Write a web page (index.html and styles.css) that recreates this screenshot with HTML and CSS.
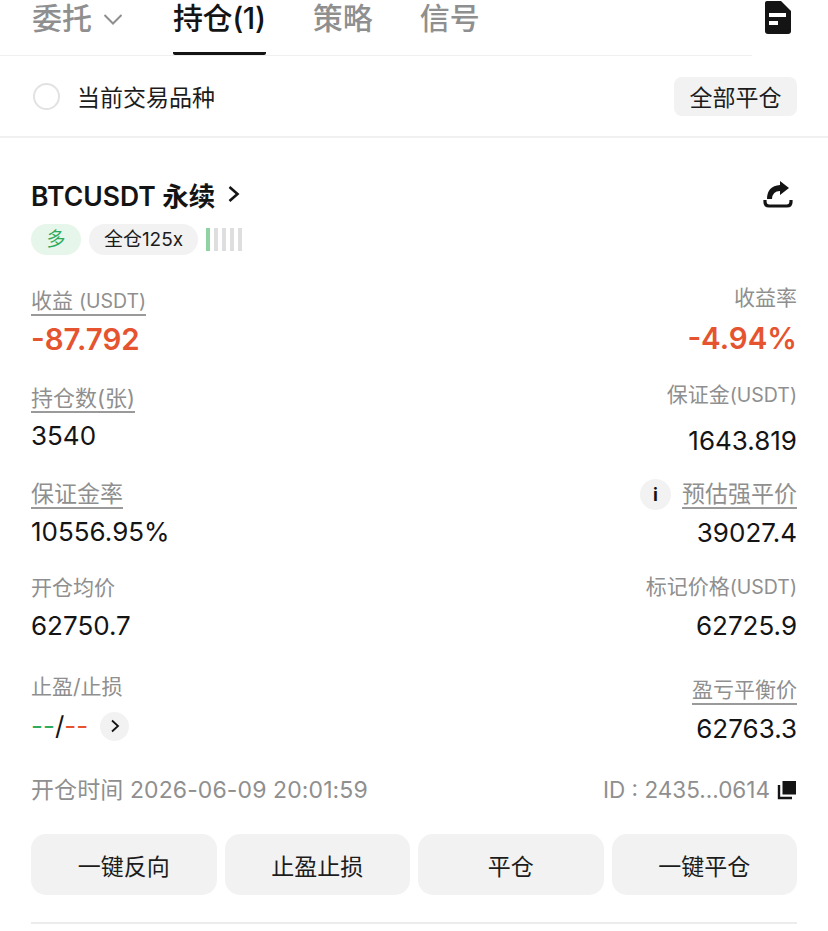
FILE: index.html
```html
<!DOCTYPE html>
<html lang="zh-CN">
<head>
    <meta charset="UTF-8">
    <meta name="viewport" content="width=device-width, initial-scale=1.0">
    <title>持仓</title>
    <link rel="stylesheet" href="styles.css">
</head>
<body>
    <!-- tabs -->
    <div class="tabs-row">
        <nav class="tabs">
            <span class="tab tab-first">委托<svg class="tab-caret" width="20" height="13" viewBox="0 0 20 13"><path d="M1.500 2 L10 10.500 L18.500 2" fill="none" stroke="#8f8f8f" stroke-width="2"/></svg></span>
            <span class="tab active">持仓(1)</span>
            <span class="tab">策略</span>
            <span class="tab">信号</span>
        </nav>
        <svg class="doc-icon" width="28" height="35" viewBox="0 0 28 35">
            <path d="M3 1 H17 L27 11 V31 Q27 34 24 34 H4 Q1 34 1 31 V3 Q1 1 3 1 Z" fill="#141414"/>
            <rect x="5" y="13" width="17" height="4" fill="#fff"/>
            <rect x="5" y="21" width="9" height="4" fill="#fff"/>
        </svg>
    </div>

    <div class="filter-row">
        <label class="filter-label"><span class="radio"></span>当前交易品种</label>
        <button class="close-all">全部平仓</button>
    </div>

    <!-- position card -->
    <section class="card">
        <div class="card-head">
            <div class="symbol">BTCUSDT 永续
                <svg class="symbol-arrow" width="14" height="18" viewBox="0 0 14 18"><path d="M2.500 2 L10.500 9 L2.500 16" fill="none" stroke="#141414" stroke-width="2.600"/></svg>
            </div>
            <svg class="share-icon" width="30" height="27" viewBox="0 0 30 27">
                <path d="M17 0 L26 7 L17 14 V10 Q9.500 10 9 18 H4 Q4 5 17 4 Z" fill="#141414"/>
                <path d="M2 19 V21 Q2 25 6 25 H24 Q28 25 28 21 V19" fill="none" stroke="#141414" stroke-width="3.200"/>
            </svg>
        </div>
        <div class="tags">
            <span class="tag tag-long">多</span>
            <span class="tag tag-lever">全仓125x</span>
            <span class="risk"><i class="on"></i><i></i><i></i><i></i><i></i></span>
        </div>

        <div class="metrics">
            <div class="metric-col">
                <div class="metric m-l1"><span class="label dotted">收益 <span class="latin">(USDT)</span></span><span class="value loss">-87.792</span></div>
                <div class="metric m-l2"><span class="label dotted">持仓数(张)</span><span class="value">3540</span></div>
                <div class="metric m-l3"><span class="label dotted">保证金率</span><span class="value">10556.95%</span></div>
                <div class="metric m-l4"><span class="label">开仓均价</span><span class="value">62750.7</span></div>
                <div class="metric m-l5"><span class="label">止盈/止损</span>
                    <span class="value tpsl"><b class="tp">--</b>/<b class="sl">--</b>
                        <span class="round-btn"><svg width="10" height="14" viewBox="0 0 10 14"><path d="M2 1.500 L8 7 L2 12.500" fill="none" stroke="#141414" stroke-width="1.800"/></svg></span>
                    </span>
                </div>
            </div>
            <div class="metric-col right">
                <div class="metric m-r1"><span class="label">收益率</span><span class="value loss">-4.94%</span></div>
                <div class="metric m-r2"><span class="label">保证金<span class="latin">(USDT)</span></span><span class="value">1643.819</span></div>
                <div class="metric m-r3"><span class="label-line"><span class="info">i</span><span class="label dotted">预估强平价</span></span><span class="value">39027.4</span></div>
                <div class="metric m-r4"><span class="label">标记价格<span class="latin">(USDT)</span></span><span class="value">62725.9</span></div>
                <div class="metric m-r5"><span class="label dotted">盈亏平衡价</span><span class="value">62763.3</span></div>
            </div>
        </div>

        <div class="meta">
            <span class="meta-time">开仓时间 2026-06-09 20:01:59</span>
            <span class="meta-id">ID : 2435...0614
                <svg width="20" height="20" viewBox="0 0 20 20"><rect x="5.500" y="1" width="13.500" height="13.500" fill="#141414"/><path d="M2 5 V18 H15" fill="none" stroke="#141414" stroke-width="2.400"/></svg>
            </span>
        </div>

        <div class="actions">
            <button>一键反向</button>
            <button>止盈止损</button>
            <button>平仓</button>
            <button>一键平仓</button>
        </div>
        <div class="card-end"></div>
    </section>
</body>
</html>
```

FILE: styles.css
```css
html, body {
    height: 931px;
    overflow: hidden;
}

body {
    margin: 0;
    background: #fff;
    color: #141414;
    font-family: Inter, 'Noto Sans CJK SC', sans-serif;
}

button {
    font-family: inherit;
    border: none;
    color: #1c1c1c;
}

.tabs-row {
    position: relative;
    height: 56px;
}

.tabs {
    display: flex;
    align-items: flex-start;
    gap: 47px;
    width: 720px;
    height: 55px;
    padding-left: 32px;
    border-bottom: 1px solid #efefef;
}

.tab {
    font-size: 30px;
    line-height: 37px;
    color: #8f8f8f;
    font-weight: 500;
    height: 55px;
    box-sizing: border-box;
}

.tab-first {
    margin-right: 3px;
}

.tab-caret {
    margin-left: 11px;
    vertical-align: 3px;
}

.tab.active {
    color: #141414;
    letter-spacing: -0.4px;
    border-bottom: 3px solid #141414;
    border-radius: 2px;
}

.doc-icon {
    position: absolute;
    right: 36px;
    top: 0;
}

.filter-row {
    display: flex;
    justify-content: space-between;
    align-items: center;
    height: 80px;
    padding: 0 31px 0 33px;
    border-bottom: 2px solid #f0f0f0;
}

.filter-label {
    display: flex;
    align-items: center;
    gap: 17px;
    font-size: 23px;
    color: #1c1c1c;
}

.radio {
    width: 23px;
    height: 23px;
    border: 2px solid #e2e2e2;
    border-radius: 50%;
}

.close-all {
    width: 123px;
    height: 39px;
    padding: 0;
    font-size: 23px;
    background: #f2f2f2;
    border-radius: 8px;
}

.card {
    padding: 0 31px 0 31px;
}

.card-head {
    display: flex;
    justify-content: space-between;
    align-items: center;
    height: 40px;
    margin-top: 36px;
}

.symbol {
    display: flex;
    align-items: center;
    gap: 12px;
    font-size: 26.500px;
    font-weight: 600;
}

.share-icon {
    margin-right: 4px;
}

.tags {
    display: flex;
    align-items: center;
    gap: 8px;
    margin-top: 10px;
}

.tag {
    height: 31px;
    line-height: 31px;
    border-radius: 16px;
    font-size: 19px;
    text-align: center;
}

.tag-long {
    width: 50px;
    background: #e6f6ea;
    color: #2eab5c;
}

.tag-lever {
    width: 109px;
    background: #f2f2f2;
    color: #1c1c1c;
}

.risk {
    display: flex;
    gap: 4px;
}

.risk i {
    width: 4px;
    height: 23px;
    background: #dedede;
}

.risk i.on {
    background: #8fd3a2;
}

.metrics {
    display: flex;
    justify-content: space-between;
}

.metric-col {
    display: flex;
    flex-direction: column;
    align-items: flex-start;
}

.metric-col.right {
    align-items: flex-end;
}

.metric {
    display: flex;
    flex-direction: column;
    align-items: inherit;
}

.label {
    font-size: 21px;
    line-height: 28px;
    color: #8f8f8f;
}

.label .latin {
    font-size: 19.500px;
}

.label.dotted {
    border-bottom: 2px solid #9a9a9a;
    line-height: 26px;
}

.m-l2 .label {
    font-size: 22px;
}

.m-l3 .label, .m-r3 .label {
    font-size: 23px;
}

.label-line {
    display: flex;
    align-items: center;
    gap: 11px;
}

.info {
    width: 31px;
    height: 31px;
    line-height: 31px;
    text-align: center;
    border-radius: 50%;
    background: #f2f2f2;
    color: #141414;
    font-size: 18px;
    font-weight: 700;
}

.value {
    margin-top: 5px;
    font-size: 26px;
    line-height: 36px;
    color: #141414;
}

.value.loss {
    color: #e5532f;
    font-size: 29.500px;
    font-weight: 600;
}

/* the two columns don't line up row for row, so each row has its own offset */
.m-l1 { margin-top: 33px; }
.m-l2 { margin-top: 28px; }
.m-l3 { margin-top: 27px; }
.m-l4 { margin-top: 24px; }
.m-l5 { margin-top: 29px; }
.m-r1 { margin-top: 29px; }
.m-r2 { margin-top: 25px; }
.m-r3 { margin-top: 20px; }
.m-r4 { margin-top: 22px; }
.m-r5 { margin-top: 33px; }
.m-l4 .value { margin-top: 6px; }
.m-l5 .value { margin-top: 7px; }
.m-r1 .value { margin-top: 8px; }
.m-r2 .value { margin-top: 14px; }
.m-r4 .value { margin-top: 7px; }
.m-r5 .value { margin-top: 6px; }

.tpsl {
    display: flex;
    align-items: center;
    font-size: 26px;
}

.tpsl b {
    font-weight: 400;
}

.tp { color: #2eab5c; }
.sl { color: #e5532f; }

.round-btn {
    display: flex;
    align-items: center;
    justify-content: center;
    width: 29px;
    height: 29px;
    margin-left: 12px;
    border-radius: 50%;
    background: #f2f2f2;
}

.meta {
    display: flex;
    justify-content: space-between;
    align-items: center;
    margin-top: 28px;
    font-size: 23px;
    line-height: 30px;
    color: #8f8f8f;
}

.meta-time {
    letter-spacing: 0.1px;
}

.meta-id {
    display: flex;
    align-items: center;
    gap: 7px;
    font-size: 22.500px;
}

.actions {
    display: flex;
    gap: 8px;
    margin-top: 29px;
}

.actions button {
    flex: 1;
    height: 61px;
    padding: 0;
    font-size: 23px;
    background: #f2f2f2;
    border-radius: 15px;
}

.card-end {
    height: 2px;
    margin-top: 27px;
    background: #ececec;
}
```
